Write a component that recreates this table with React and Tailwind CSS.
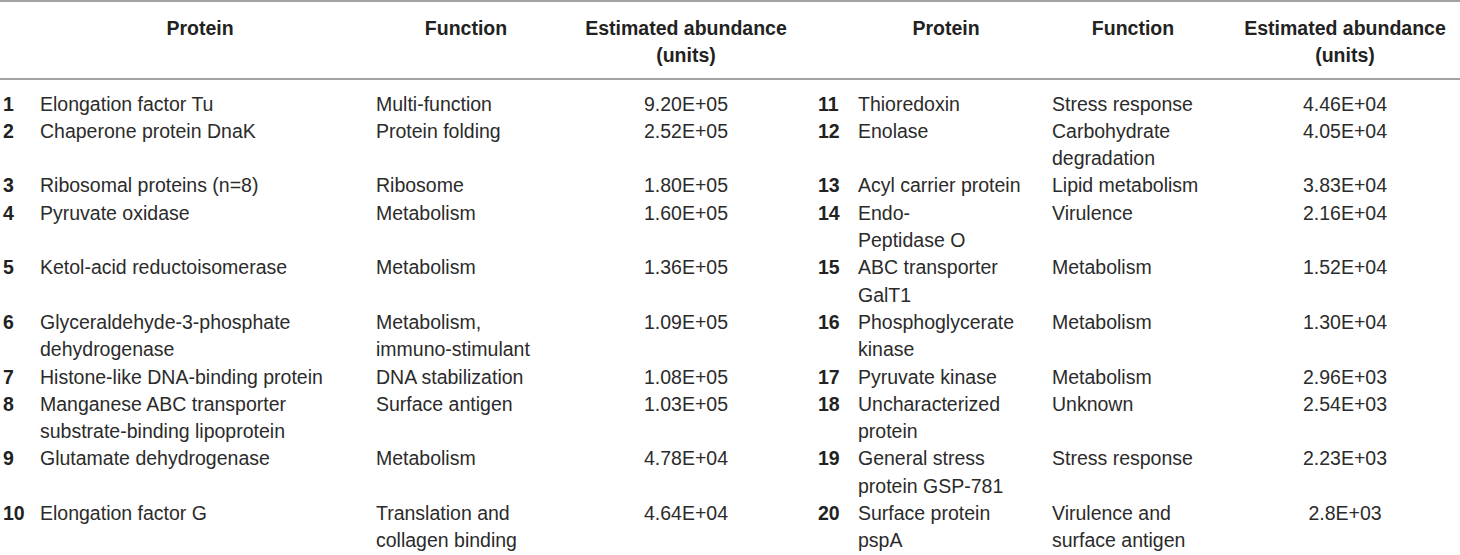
const rows = [
  {
    n: '1', protein: ['Elongation factor Tu'], fn: ['Multi-function'], ab: '9.20E+05',
    n2: '11', protein2: ['Thioredoxin'], fn2: ['Stress response'], ab2: '4.46E+04',
  },
  {
    n: '2', protein: ['Chaperone protein DnaK'], fn: ['Protein folding'], ab: '2.52E+05',
    n2: '12', protein2: ['Enolase'], fn2: ['Carbohydrate', 'degradation'], ab2: '4.05E+04',
  },
  {
    n: '3', protein: ['Ribosomal proteins (n=8)'], fn: ['Ribosome'], ab: '1.80E+05',
    n2: '13', protein2: ['Acyl carrier protein'], fn2: ['Lipid metabolism'], ab2: '3.83E+04',
  },
  {
    n: '4', protein: ['Pyruvate oxidase'], fn: ['Metabolism'], ab: '1.60E+05',
    n2: '14', protein2: ['Endo-', 'Peptidase O'], fn2: ['Virulence'], ab2: '2.16E+04',
  },
  {
    n: '5', protein: ['Ketol-acid reductoisomerase'], fn: ['Metabolism'], ab: '1.36E+05',
    n2: '15', protein2: ['ABC transporter', 'GalT1'], fn2: ['Metabolism'], ab2: '1.52E+04',
  },
  {
    n: '6', protein: ['Glyceraldehyde-3-phosphate', 'dehydrogenase'], fn: ['Metabolism,', 'immuno-stimulant'], ab: '1.09E+05',
    n2: '16', protein2: ['Phosphoglycerate', 'kinase'], fn2: ['Metabolism'], ab2: '1.30E+04',
  },
  {
    n: '7', protein: ['Histone-like DNA-binding protein'], fn: ['DNA stabilization'], ab: '1.08E+05',
    n2: '17', protein2: ['Pyruvate kinase'], fn2: ['Metabolism'], ab2: '2.96E+03',
  },
  {
    n: '8', protein: ['Manganese ABC transporter', 'substrate-binding lipoprotein'], fn: ['Surface antigen'], ab: '1.03E+05',
    n2: '18', protein2: ['Uncharacterized', 'protein'], fn2: ['Unknown'], ab2: '2.54E+03',
  },
  {
    n: '9', protein: ['Glutamate dehydrogenase'], fn: ['Metabolism'], ab: '4.78E+04',
    n2: '19', protein2: ['General stress', 'protein GSP-781'], fn2: ['Stress response'], ab2: '2.23E+03',
  },
  {
    n: '10', protein: ['Elongation factor G'], fn: ['Translation and', 'collagen binding'], ab: '4.64E+04',
    n2: '20', protein2: ['Surface protein', 'pspA'], fn2: ['Virulence and', 'surface antigen'], ab2: '2.8E+03',
  },
];

const Lines = ({ lines }) => (
  <>
    {lines.map((l, i) => (
      <div key={i} className="whitespace-nowrap">{l}</div>
    ))}
  </>
);

const grid =
  'grid grid-cols-[40px_336px_200px_220px_62px_194px_184px_218px]';

export default function App() {
  return (
    <div
      className="w-[1460px] h-[555px] overflow-hidden bg-white text-[#2b2b2b] text-[19.5px] leading-[27.3px]"
      style={{ fontFamily: '"Liberation Sans", Arial, sans-serif' }}
    >
      {/* header */}
      <div className={`${grid} border-t-2 border-b-2 border-[#a3a3a3] pt-[13px] pb-[8px] font-bold text-[#222]`}>
        <div />
        <div className="pr-[16px] text-center">Protein</div>
        <div className="pr-[20px] text-center">Function</div>
        <div className="text-center">
          <div>Estimated abundance</div>
          <div>(units)</div>
        </div>
        <div />
        <div className="pr-[18px] text-center">Protein</div>
        <div className="pr-[22px] text-center">Function</div>
        <div className="text-center">
          <div>Estimated abundance</div>
          <div>(units)</div>
        </div>
      </div>

      {/* body */}
      <div className={`${grid} pt-[11px]`}>
        {rows.map((r) => (
          <div key={r.n} className="contents">
            <div className="pl-[3px] font-bold text-[#222]">{r.n}</div>
            <div><Lines lines={r.protein} /></div>
            <div><Lines lines={r.fn} /></div>
            <div className="text-center">{r.ab}</div>
            <div className="pl-[22px] font-bold text-[#222]">{r.n2}</div>
            <div><Lines lines={r.protein2} /></div>
            <div><Lines lines={r.fn2} /></div>
            <div className="text-center">{r.ab2}</div>
          </div>
        ))}
      </div>
    </div>
  );
}
